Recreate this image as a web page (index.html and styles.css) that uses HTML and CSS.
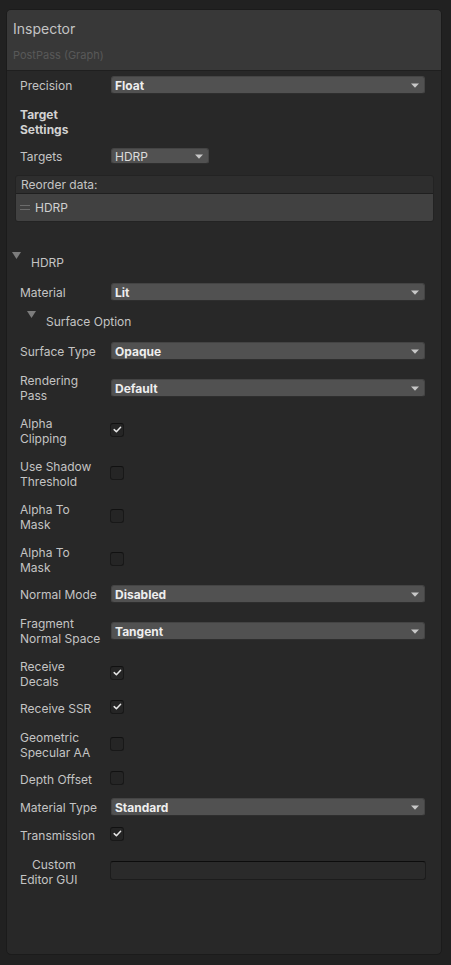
FILE: index.html
```html
<!DOCTYPE html>
<html>
<head>
<meta charset="utf-8">
<title>Inspector</title>
<link rel="stylesheet" href="styles.css">
</head>
<body>
<div class="panel">
  <div class="header">
    <div class="title">Inspector</div>
    <div class="subtitle">PostPass (Graph)</div>
  </div>
  <div class="content">
    <div class="row"><div class="label">Precision</div><div class="dropdown"><span>Float</span><svg class="arrow" width="8" height="5" viewBox="0 0 8 5"><path d="M0 0.5H8L4 4.8Z"/></svg></div></div>
    <div class="row double"><div class="label strong">Target<br>Settings</div></div>
    <div class="row"><div class="label">Targets</div><div class="dropdown small"><span>HDRP</span><svg class="arrow" width="8" height="5" viewBox="0 0 8 5"><path d="M0 0.5H8L4 4.8Z"/></svg></div></div>
    <div class="reorder">
      <div class="reorder-head">Reorder data:</div>
      <div class="reorder-item"><span class="handle"></span><span>HDRP</span></div>
    </div>
    <div class="foldout top"><svg class="tri" width="9" height="7" viewBox="0 0 9 7"><path d="M0 0H9L4.5 7Z"/></svg><span class="ftext">HDRP</span></div>
    <div class="row"><div class="label">Material</div><div class="dropdown"><span>Lit</span><svg class="arrow" width="8" height="5" viewBox="0 0 8 5"><path d="M0 0.5H8L4 4.8Z"/></svg></div></div>
    <div class="foldout sub"><svg class="tri" width="9" height="7" viewBox="0 0 9 7"><path d="M0 0H9L4.5 7Z"/></svg><span class="ftext">Surface Option</span></div>
    <div class="row"><div class="label">Surface Type</div><div class="dropdown"><span>Opaque</span><svg class="arrow" width="8" height="5" viewBox="0 0 8 5"><path d="M0 0.5H8L4 4.8Z"/></svg></div></div>
    <div class="row double"><div class="label">Rendering<br>Pass</div><div class="dropdown"><span>Default</span><svg class="arrow" width="8" height="5" viewBox="0 0 8 5"><path d="M0 0.5H8L4 4.8Z"/></svg></div></div>
    <div class="row double"><div class="label">Alpha<br>Clipping</div><div class="checkbox"><svg width="11" height="11" viewBox="0 0 11 11"><path d="M2.2 5.6L4.4 7.8L8.6 3.2"/></svg></div></div>
    <div class="row double"><div class="label">Use Shadow<br>Threshold</div><div class="checkbox"></div></div>
    <div class="row double"><div class="label">Alpha To<br>Mask</div><div class="checkbox"></div></div>
    <div class="row double"><div class="label">Alpha To<br>Mask</div><div class="checkbox"></div></div>
    <div class="row"><div class="label">Normal Mode</div><div class="dropdown"><span>Disabled</span><svg class="arrow" width="8" height="5" viewBox="0 0 8 5"><path d="M0 0.5H8L4 4.8Z"/></svg></div></div>
    <div class="row double"><div class="label">Fragment<br>Normal Space</div><div class="dropdown"><span>Tangent</span><svg class="arrow" width="8" height="5" viewBox="0 0 8 5"><path d="M0 0.5H8L4 4.8Z"/></svg></div></div>
    <div class="row double"><div class="label">Receive<br>Decals</div><div class="checkbox"><svg width="11" height="11" viewBox="0 0 11 11"><path d="M2.2 5.6L4.4 7.8L8.6 3.2"/></svg></div></div>
    <div class="row"><div class="label">Receive SSR</div><div class="checkbox"><svg width="11" height="11" viewBox="0 0 11 11"><path d="M2.2 5.6L4.4 7.8L8.6 3.2"/></svg></div></div>
    <div class="row double"><div class="label">Geometric<br>Specular AA</div><div class="checkbox"></div></div>
    <div class="row"><div class="label">Depth Offset</div><div class="checkbox"></div></div>
    <div class="row"><div class="label">Material Type</div><div class="dropdown"><span>Standard</span><svg class="arrow" width="8" height="5" viewBox="0 0 8 5"><path d="M0 0.5H8L4 4.8Z"/></svg></div></div>
    <div class="row"><div class="label">Transmission</div><div class="checkbox"><svg width="11" height="11" viewBox="0 0 11 11"><path d="M2.2 5.6L4.4 7.8L8.6 3.2"/></svg></div></div>
    <div class="row double"><div class="label"><span class="indent">Custom</span><br>Editor GUI</div><div class="textfield"></div></div>
  </div>
</div>
</body>
</html>
```
FILE: styles.css
```css
html, body {
  margin: 0;
  padding: 0;
  background: #212121;
}
body {
  padding: 9px 0 0 6px;
  font-family: Inter, "Noto Sans", "Liberation Sans", sans-serif;
  font-size: 12px;
  color: #c4c4c4;
}
.panel {
  width: 436px;
  height: 946px;
  box-sizing: border-box;
  border: 1px solid #1b1b1b;
  border-radius: 5px;
  background: #282828;
  overflow: hidden;
}
.header {
  background: #383838;
  padding: 10px 0 8px 6px;
  border-bottom: 1px solid #1f1f1f;
}
.title {
  font-size: 14px;
  line-height: 17px;
  color: #c4c4c4;
}
.subtitle {
  margin-top: 11px;
  font-size: 11px;
  line-height: 14px;
  color: #585858;
}
.content {
  padding: 2px 15px 0 13px;
}
.row {
  display: flex;
  align-items: center;
  box-sizing: border-box;
  min-height: 28px;
  padding: 3px 0 7px;
}
.row.double {
  padding: 6px 0 7px;
}
.label {
  width: 90px;
  flex: none;
  line-height: 15px;
  white-space: nowrap;
  color: #c4c4c4;
}
.label.strong {
  font-weight: 700;
  color: #d2d2d2;
}
.indent {
  display: inline-block;
  margin-left: 12px;
}
.dropdown {
  flex: 1;
  height: 18px;
  box-sizing: border-box;
  margin: 0 1px;
  display: flex;
  align-items: center;
  justify-content: space-between;
  padding: 0 5px 0 3px;
  background: #515151;
  border: 1px solid #444444;
  border-bottom-color: #2e2e2e;
  border-radius: 3px;
  font-weight: 700;
  color: #eeeeee;
}
.dropdown.small {
  flex: none;
  width: 98px;
  height: 16px;
  font-weight: 400;
  color: #dcdcdc;
}
.arrow path {
  fill: #c8c8c8;
}
.checkbox {
  width: 14px;
  height: 14px;
  box-sizing: border-box;
  margin-bottom: 3px;
  background: #252525;
  border: 1px solid #181818;
  border-top-color: #111111;
  border-radius: 3px;
  display: flex;
  align-items: center;
  justify-content: center;
}
.checkbox path {
  fill: none;
  stroke: #e6e6e6;
  stroke-width: 1.5;
  stroke-linecap: round;
  stroke-linejoin: round;
}
.textfield {
  flex: 1;
  height: 19px;
  box-sizing: border-box;
  margin-bottom: 3px;
  background: #2a2a2a;
  border: 1px solid #1c1c1c;
  border-top-color: #0c0c0c;
  border-radius: 3px;
}
.reorder {
  margin: 3px -8px 0 -5px;
  border: 1px solid #232323;
  border-radius: 3px;
  overflow: hidden;
}
.reorder-head {
  height: 17px;
  line-height: 17px;
  padding-left: 5px;
  background: #2e2e2e;
  border-bottom: 1px solid #1f1f1f;
  color: #c4c4c4;
}
.reorder-item {
  height: 27px;
  display: flex;
  align-items: center;
  background: #414141;
  color: #d0d0d0;
}
.handle {
  width: 10px;
  height: 5px;
  box-sizing: border-box;
  margin: 0 5px 0 4px;
  border-top: 1px solid #6c6c6c;
  border-bottom: 1px solid #6c6c6c;
}
.foldout {
  display: flex;
  align-items: flex-start;
}
.foldout.top {
  margin-left: -8px;
  padding: 30px 0 10px;
}
.foldout.sub {
  margin-left: 7px;
  padding: 3px 0 10px;
}
.tri {
  flex: none;
}
.tri path {
  fill: #7c7c7c;
}
.ftext {
  margin-top: 3px;
  margin-left: 10px;
  line-height: 15px;
  color: #c4c4c4;
}
```
